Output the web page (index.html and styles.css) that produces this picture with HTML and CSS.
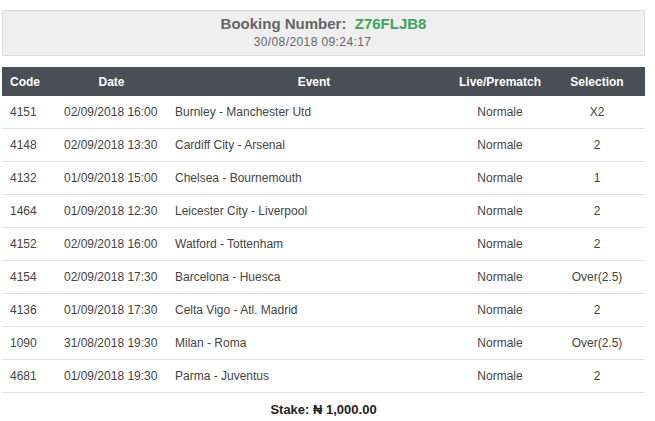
FILE: index.html
```html
<!DOCTYPE html>
<html>
<head>
<meta charset="utf-8">
<link rel="stylesheet" href="styles.css">
</head>
<body>
<div class="page">
  <div class="booking">
    <div class="booking-title">Booking Number:&nbsp; <span class="code">Z76FLJB8</span></div>
    <div class="booking-date">30/08/2018 09:24:17</div>
  </div>
  <table class="bets">
    <colgroup>
      <col class="c-code"><col class="c-date"><col class="c-event"><col class="c-live"><col class="c-sel">
    </colgroup>
    <thead>
      <tr>
        <th class="h-code">Code</th>
        <th class="h-date">Date</th>
        <th class="h-event">Event</th>
        <th class="h-live">Live/Prematch</th>
        <th class="h-sel">Selection</th>
      </tr>
    </thead>
    <tbody>
      <tr><td>4151</td><td>02/09/2018 16:00</td><td>Burnley - Manchester Utd</td><td class="live">Normale</td><td class="sel">X2</td></tr>
      <tr><td>4148</td><td>02/09/2018 13:30</td><td>Cardiff City - Arsenal</td><td class="live">Normale</td><td class="sel">2</td></tr>
      <tr><td>4132</td><td>01/09/2018 15:00</td><td>Chelsea - Bournemouth</td><td class="live">Normale</td><td class="sel">1</td></tr>
      <tr><td>1464</td><td>01/09/2018 12:30</td><td>Leicester City - Liverpool</td><td class="live">Normale</td><td class="sel">2</td></tr>
      <tr><td>4152</td><td>02/09/2018 16:00</td><td>Watford - Tottenham</td><td class="live">Normale</td><td class="sel">2</td></tr>
      <tr><td>4154</td><td>02/09/2018 17:30</td><td>Barcelona - Huesca</td><td class="live">Normale</td><td class="sel">Over(2.5)</td></tr>
      <tr><td>4136</td><td>01/09/2018 17:30</td><td>Celta Vigo - Atl. Madrid</td><td class="live">Normale</td><td class="sel">2</td></tr>
      <tr><td>1090</td><td>31/08/2018 19:30</td><td>Milan - Roma</td><td class="live">Normale</td><td class="sel">Over(2.5)</td></tr>
      <tr><td>4681</td><td>01/09/2018 19:30</td><td>Parma - Juventus</td><td class="live">Normale</td><td class="sel">2</td></tr>
    </tbody>
  </table>
  <div class="stake">Stake: ₦ 1,000.00</div>
</div>
</body>
</html>
```

FILE: styles.css
```css
html, body {
  margin: 0;
  padding: 0;
  background: #ffffff;
}
body {
  font-family: "Liberation Sans", Arial, sans-serif;
  color: #333333;
}
.page {
  padding: 10px 10px 0 2px;
}
.booking {
  background: #efefef;
  border: 1px solid #dcdcdc;
  padding: 4px 0;
  text-align: center;
}
.booking-title {
  font-size: 15px;
  line-height: 18px;
  font-weight: bold;
  color: #656565;
}
.booking-title .code {
  color: #3ea35c;
}
.booking-date {
  font-size: 12px;
  line-height: 18px;
  color: #666666;
  letter-spacing: 0.4px;
  padding-right: 22px;
}
.bets {
  margin-top: 11px;
  width: 643px;
  border-collapse: collapse;
  table-layout: fixed;
  font-size: 12px;
}
.c-code { width: 54px; }
.c-date { width: 111px; }
.c-event { width: 288px; }
.c-live { width: 94px; }
.c-sel { width: 96px; }
.bets thead tr {
  background: #494e57;
  color: #ffffff;
}
.bets th {
  height: 29px;
  padding: 0;
  font-weight: bold;
  text-align: center;
  white-space: nowrap;
}
.bets th.h-code {
  text-align: left;
  padding-left: 8px;
}
.bets th.h-event {
  padding-left: 6px;
}
.bets th.h-live {
  padding-right: 4px;
}
.bets td {
  height: 32px;
  padding: 0 0 0 8px;
  border-bottom: 1px solid #e2e2e2;
  white-space: nowrap;
  color: #444444;
}
.bets td.live {
  text-align: center;
  padding: 0 4px 0 0;
}
.bets td.sel {
  text-align: center;
  padding: 0;
}
.stake {
  margin-top: 9px;
  font-size: 13px;
  line-height: 16px;
  font-weight: bold;
  text-align: center;
  color: #222222;
}
```
